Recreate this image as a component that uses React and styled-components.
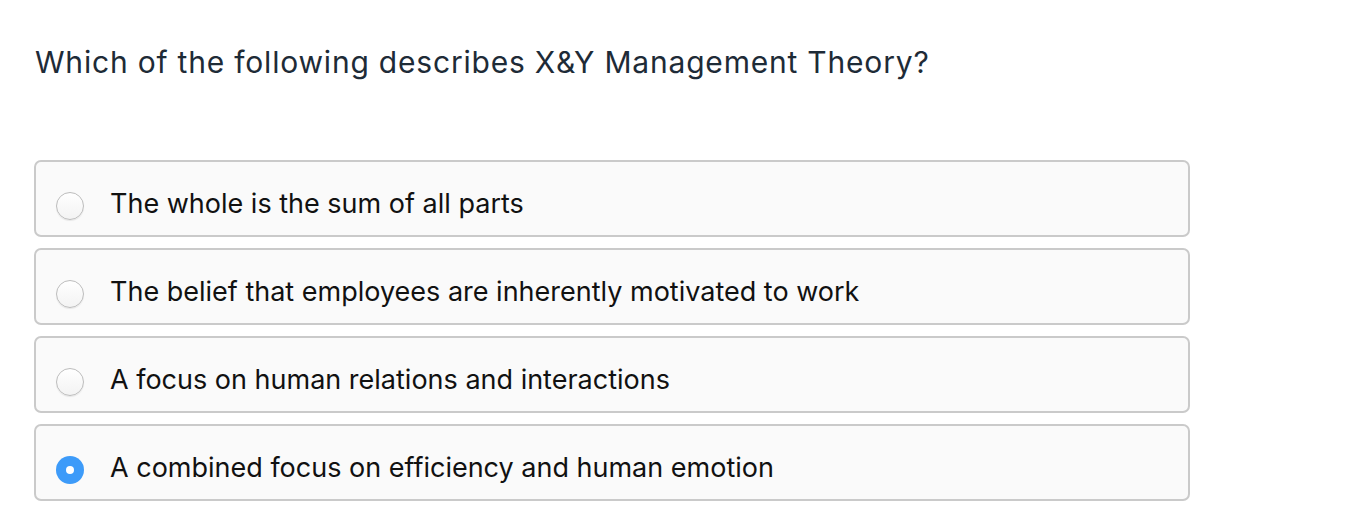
import React from 'react';
import styled, { createGlobalStyle } from 'styled-components';

const GlobalStyle = createGlobalStyle`
  body {
    margin: 0;
    background: #ffffff;
    font-family: Inter, "Liberation Sans", sans-serif;
  }
`;

const options = [
  'The whole is the sum of all parts',
  'The belief that employees are inherently motivated to work',
  'A focus on human relations and interactions',
  'A combined focus on efficiency and human emotion',
];

function App() {
  const selected = 3;
  return (
    <Page>
      <GlobalStyle />
      <Question>Which of the following describes X&amp;Y Management Theory?</Question>
      <OptionList>
        {options.map((text, i) => (
          <Option key={i}>
            <Radio $checked={i === selected} />
            <Label>{text}</Label>
          </Option>
        ))}
      </OptionList>
    </Page>
  );
}

const Page = styled.div`
  padding: 42px 0 0 34px;
  width: 1156px;
`;
const Question = styled.h1`
  margin: 0 0 78px 1px;
  font-size: 30px;
  line-height: 40px;
  font-weight: 400;
  letter-spacing: 0.8px;
  color: #1e2b37;
`;
const OptionList = styled.div`
  display: flex;
  flex-direction: column;
  gap: 11px;
`;
const Option = styled.div`
  display: flex;
  align-items: center;
  height: 73px;
  padding: 0 20px;
  border: 2px solid #cacaca;
  border-radius: 7px;
  background: #fafafa;
`;
const Radio = styled.span`
  flex: none;
  box-sizing: border-box;
  width: 28px;
  height: 28px;
  margin: 14px 26px 0 0;
  border-radius: 50%;
  background: ${p => (p.$checked ? '#3d9bf9' : 'linear-gradient(#fff, #f3f3f3)')};
  border: ${p => (p.$checked ? 'none' : '1px solid #bdbdbd')};
  box-shadow: ${p => (p.$checked ? 'none' : '0 1px 1px rgba(0,0,0,0.08)')};
  position: relative;
  &::after {
    content: '';
    display: ${p => (p.$checked ? 'block' : 'none')};
    position: absolute;
    left: 10px;
    top: 10px;
    width: 8px;
    height: 8px;
    border-radius: 50%;
    background: #fff;
  }
`;
const Label = styled.span`
  margin-top: 10px;
  font-size: 27px;
  color: #111;
`;

export default App;
